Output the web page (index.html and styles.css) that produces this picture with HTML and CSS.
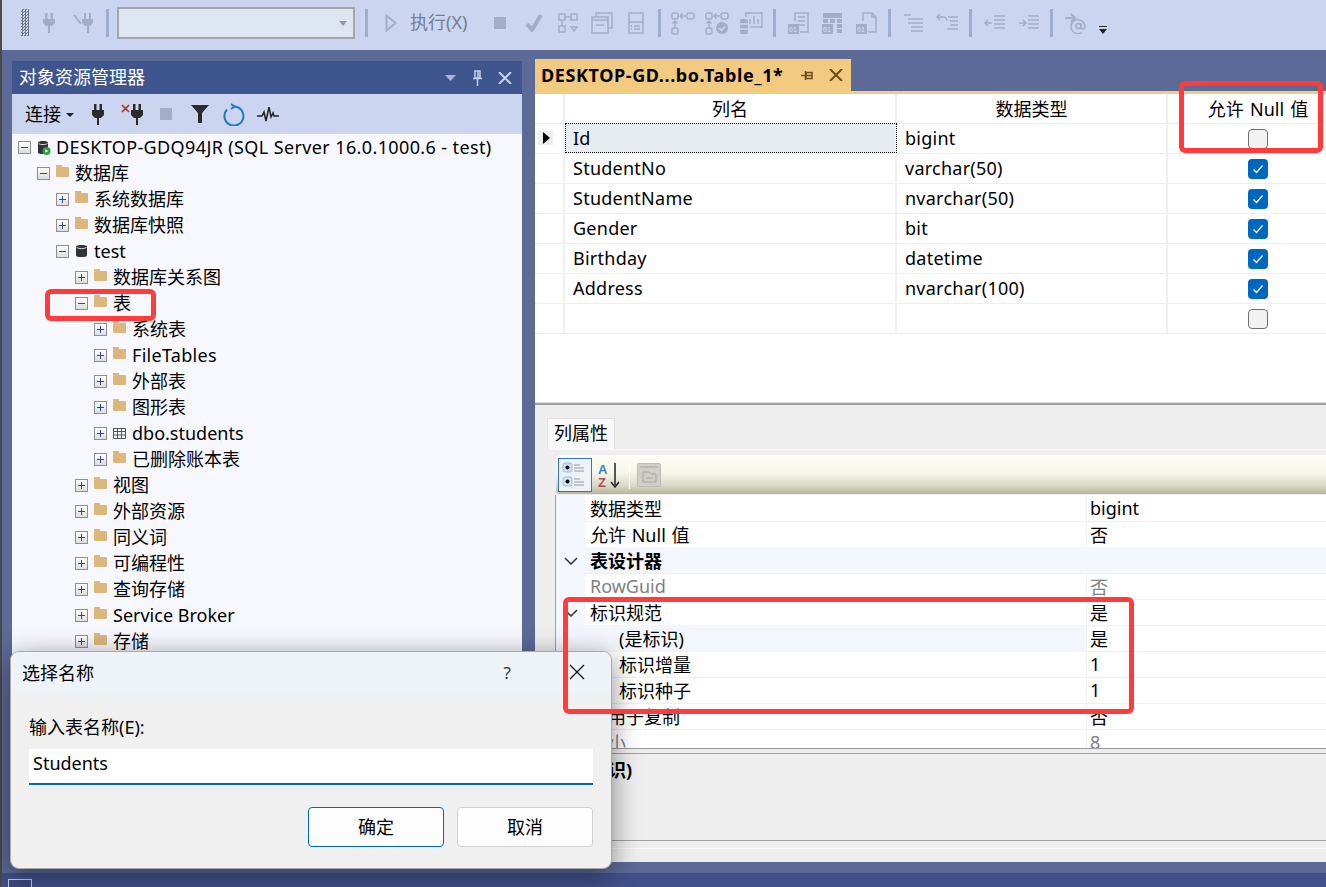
FILE: index.html
```html
<!DOCTYPE html>
<html lang="zh">
<head>
<meta charset="utf-8">
<title>SSMS 表设计器</title>
<link rel="stylesheet" href="styles.css">
</head>
<body>
<div class="app">
  <div class="toolbar">
    <div class="grip"></div>
    <div class="tool t-plug"><svg width="12" height="20" viewBox="0 0 12 20"><path class="dis" d="M2 0h2.500v6H2zM7.500 0H10v6H7.500zM0 6h12v4l-3 3H7v7H5v-7H3l-3-3z"/></svg></div>
    <div class="tool t-plug2"><svg width="20" height="20" viewBox="0 0 20 20"><path class="dis" d="M11 0h2v6h-2zM16 0h2v6h-2zM9 6h11v4l-3 3h-1v7h-2v-7h-2l-3-3z"/><path class="dis-line wide" d="M1 2l7 9"/></svg></div>
    <div class="sep s-a"></div>
    <div class="combo"><span class="combo-caret"></span></div>
    <div class="sep s-b"></div>
    <div class="tool t-play"><svg width="12" height="18" viewBox="0 0 12 18"><path class="dis-line wide" d="M1.500 1.500v15l9-7.500z"/></svg></div>
    <div class="run-label">执行(X)</div>
    <div class="tool t34 t-stop"><svg width="12" height="12" viewBox="0 0 12 12"><rect class="dis" width="12" height="12"/></svg></div>
    <div class="tool t34"><svg width="18" height="18" viewBox="0 0 18 18"><path class="dis-thick" d="M2 10l5 6 9-15"/></svg></div>
    <div class="tool t34"><svg width="22" height="22" viewBox="0 0 22 22"><path class="dis-line" d="M2 2h6v6H2zM14 2h6v6h-6zM2 14h6v6H2zM14 15l3 4 3-4zM5 8v6M8 5h6"/></svg></div>
    <div class="tool t34"><svg width="22" height="22" viewBox="0 0 22 22"><path class="dis-line" d="M5 5V1h16v15h-4M1 5h16v16H1zM1 8h16M5 13h8"/></svg></div>
    <div class="tool t34"><svg width="16" height="22" viewBox="0 0 16 22"><path class="dis-line" d="M1 1h14v20H1zM1 10h14M6 14h6M6 17h6M3 14h1M3 17h1"/></svg></div>
    <div class="sep"></div>
    <div class="tool t34"><svg width="24" height="24" viewBox="0 0 24 24"><g class="dis-line"><rect x="1" y="2" width="6" height="6" rx="1.500"/><rect x="16" y="2" width="7" height="6" rx="2"/><rect x="1" y="17" width="6" height="6" rx="1.500"/><path d="M9 5h6M11.500 2.500L9 5l2.500 2.500M4 10v7M1.500 12.500L4 10l2.500 2.500"/></g></svg></div>
    <div class="tool t34"><svg width="24" height="24" viewBox="0 0 24 24"><g class="dis-line"><rect x="1" y="2" width="6" height="6" rx="1.500"/><rect x="16" y="2" width="7" height="6" rx="2"/><rect x="1" y="17" width="6" height="6" rx="1.500"/><path d="M9 5h6M11.500 2.500L9 5l2.500 2.500M4 10v7M1.500 12.500L4 10l2.500 2.500"/></g><circle class="dis" cx="17" cy="17" r="6"/><path class="cut" d="M14 17l2.500 2.500 3.500-4"/></svg></div>
    <div class="tool t34"><svg width="24" height="24" viewBox="0 0 24 24"><path class="dis-line" d="M7 6V2h16v14H11M11 13V8M15 13V5M19 13V8"/><rect class="dis" x="1" y="8" width="8" height="15" rx="1.500"/><path class="cut" d="M1 13h8M1 18h8"/></svg></div>
    <div class="sep"></div>
    <div class="tool t34"><svg width="21" height="22" viewBox="0 0 21 22"><path class="dis-line" d="M7 9V1h13v19h-8M10 5h7M10 9h7M10 13h7"/><rect class="dis" x="0" y="12" width="11" height="10"/><text class="zero" x="1" y="20">01</text></svg></div>
    <div class="tool t34"><svg width="21" height="22" viewBox="0 0 21 22"><path class="dis" d="M1 1h19v5H1zM1 7h5v4H1zM8 7h5v4H8zM15 7h5v4h-5zM15 12h5v4h-5zM15 17h5v4h-5z"/><rect class="dis" x="0" y="12" width="11" height="10"/><text class="zero" x="1" y="20">01</text></svg></div>
    <div class="tool t34"><svg width="21" height="22" viewBox="0 0 21 22"><path class="dis-line" d="M7 9V1h9l4 4v15h-8M16 1v4h4"/><rect class="dis" x="0" y="12" width="11" height="10"/><text class="zero" x="1" y="20">01</text></svg></div>
    <div class="sep"></div>
    <div class="tool t34"><svg width="19" height="20" viewBox="0 0 19 20"><path class="dis-line" d="M0 2h7M4 6h15M4 10h15M7 14h12M7 18h12"/></svg></div>
    <div class="tool t34"><svg width="23" height="20" viewBox="0 0 23 20"><path class="dis-line" d="M4 1L1 4l3 3M1 4h6a4 4 0 0 1 4 4M12 4h10M14 8h8M14 12h8M11 16h11"/></svg></div>
    <div class="sep"></div>
    <div class="tool t34"><svg width="21" height="16" viewBox="0 0 21 16"><path class="dis-line" d="M8 8H1M4 5L1 8l3 3M10 1h11M10 5h11M10 9h11M10 13h11"/></svg></div>
    <div class="tool t34"><svg width="21" height="16" viewBox="0 0 21 16"><path class="dis-line" d="M1 8h7M5 5l3 3-3 3M10 1h11M10 5h11M10 9h11M10 13h11"/></svg></div>
    <div class="sep"></div>
    <div class="tool t34"><svg width="22" height="22" viewBox="0 0 22 22"><path class="dis-line wide" d="M1 6h10M7 2l4 4-4 4"/><circle class="dis-line" cx="14.500" cy="14" r="2.500"/><path class="dis-line" d="M17 11v4a2 2 0 0 0 4 0 7 7 0 1 0-3 5.500"/></svg></div>
    <div class="overflow"></div>
  </div>

  <div class="work">
    <section class="explorer">
      <header class="ex-title">
        <span class="ex-name">对象资源管理器</span>
        <svg class="ex-down" width="11" height="6" viewBox="0 0 11 6"><path d="M0 0h11L5.500 6z"/></svg>
        <svg class="ex-pin" width="11" height="16" viewBox="0 0 11 16"><path class="pin-line" d="M3 1h5v7H3zM6 1v7M1 8.500h9M5.500 9v7"/></svg>
        <svg class="ex-x" width="14" height="12" viewBox="0 0 14 12"><path class="x-line" d="M1 0l12 12M13 0L1 12"/></svg>
      </header>
      <div class="ex-tools">
        <span class="connect">连接</span>
        <span class="caret"></span>
        <svg class="et e1" width="12" height="21" viewBox="0 0 12 21"><path class="blk" d="M2 0h2.500v6H2zM7.500 0H10v6H7.500zM0 6h12v5l-3 3H7v7H5v-7H3l-3-3z"/></svg>
        <svg class="et e2" width="22" height="21" viewBox="0 0 22 21"><path class="blk" d="M12 0h2.500v6H12zM17.500 0H20v6h-2.500zM10 6h12v5l-3 3h-2v7h-2v-7h-2l-3-3z"/><path class="redx" d="M1 1l7 7M8 1L1 8"/></svg>
        <svg class="et e3" width="12" height="12" viewBox="0 0 12 12"><rect class="gry" width="12" height="12"/></svg>
        <svg class="et e4" width="18" height="18" viewBox="0 0 18 18"><path class="blk" d="M0 0h18l-7 8v10H7V8z"/></svg>
        <svg class="et e5" width="22" height="23" viewBox="0 0 22 23"><path class="ref" d="M11 3.500a9.500 9.500 0 1 1-7 3"/><path class="ref" d="M8 1l3.500 2.500L8 6"/></svg>
        <svg class="et e6" width="22" height="15" viewBox="0 0 22 15"><path class="act" d="M0 9h5l2-4 2 9 3-14 2 10 2-4 1 3h5"/></svg>
      </div>
      <div class="tree">
        <div class="node l0"><span class="exp minus"></span><svg class="ico" width="14" height="15" viewBox="0 0 14 15"><path class="db" d="M1 2.500C1 .5 11 .5 11 2.500v10c0 2-10 2-10 0z"/><path class="db-top" d="M1.500 3.500c2 1.500 7 1.500 9 0"/><circle class="run" cx="9.500" cy="11" r="4"/><path class="run-p" d="M8.300 9.200v3.600l3-1.800z"/></svg><span class="lbl lat root">DESKTOP-GDQ94JR (SQL Server 16.0.1000.6 - test)</span></div>
        <div class="node l1"><span class="exp minus"></span><span class="folder"></span><span class="lbl">数据库</span></div>
        <div class="node l2"><span class="exp plus"></span><span class="folder"></span><span class="lbl">系统数据库</span></div>
        <div class="node l2"><span class="exp plus"></span><span class="folder"></span><span class="lbl">数据库快照</span></div>
        <div class="node l2"><span class="exp minus"></span><svg class="ico" width="13" height="14" viewBox="0 0 13 14"><path class="db" d="M1 2.500C1 .5 12 .5 12 2.500v9c0 2-11 2-11 0z"/><path class="db-top" d="M1.500 3.500c2 1.500 8 1.500 10 0"/></svg><span class="lbl lat">test</span></div>
        <div class="node l3"><span class="exp plus"></span><span class="folder"></span><span class="lbl">数据库关系图</span></div>
        <div class="node l3"><span class="exp minus"></span><span class="folder"></span><span class="lbl sel">表</span></div>
        <div class="node l4"><span class="exp plus"></span><span class="folder"></span><span class="lbl">系统表</span></div>
        <div class="node l4"><span class="exp plus"></span><span class="folder"></span><span class="lbl lat file">FileTables</span></div>
        <div class="node l4"><span class="exp plus"></span><span class="folder"></span><span class="lbl">外部表</span></div>
        <div class="node l4"><span class="exp plus"></span><span class="folder"></span><span class="lbl">图形表</span></div>
        <div class="node l4"><span class="exp plus"></span><svg class="ico" width="13" height="11" viewBox="0 0 13 11"><path class="tbl" d="M.5.500h12v10H.5zM.5 3.500h12M.5 7h12M4.500.500v10M8.500.500v10"/></svg><span class="lbl lat">dbo.students</span></div>
        <div class="node l4"><span class="exp plus"></span><span class="folder"></span><span class="lbl">已删除账本表</span></div>
        <div class="node l3"><span class="exp plus"></span><span class="folder"></span><span class="lbl">视图</span></div>
        <div class="node l3"><span class="exp plus"></span><span class="folder"></span><span class="lbl">外部资源</span></div>
        <div class="node l3"><span class="exp plus"></span><span class="folder"></span><span class="lbl">同义词</span></div>
        <div class="node l3"><span class="exp plus"></span><span class="folder"></span><span class="lbl">可编程性</span></div>
        <div class="node l3"><span class="exp plus"></span><span class="folder"></span><span class="lbl">查询存储</span></div>
        <div class="node l3"><span class="exp plus"></span><span class="folder"></span><span class="lbl lat">Service Broker</span></div>
        <div class="node l3"><span class="exp plus"></span><span class="folder"></span><span class="lbl">存储</span></div>
      </div>
    </section>

    <section class="doc">
      <div class="tabstrip">
        <div class="tab">
          <span class="tab-name">DESKTOP-GD...bo.Table_1*</span>
          <svg class="tab-pin" width="13" height="11" viewBox="0 0 13 11"><path class="tab-line" d="M0 5.500h4M4.500 1v9M5 2.500h6v6H5zM5 5.500h6"/></svg>
          <svg class="tab-x" width="14" height="12" viewBox="0 0 14 12"><path class="tab-line thick" d="M1 0l12 12M13 0L1 12"/></svg>
        </div>
      </div>
      <div class="tabline"></div>
      <div class="design">
        <div class="row head"><div class="c0"></div><div class="c1 ctr">列名</div><div class="c2 ctr">数据类型</div><div class="c3 ctr nulltitle">允许 Null 值</div></div>
        <div class="row"><div class="c0"><span class="sel-arrow"></span></div><div class="c1 cur">Id</div><div class="c2">bigint</div><div class="c3 ctr"><span class="cb"></span></div></div>
        <div class="row"><div class="c0"></div><div class="c1">StudentNo</div><div class="c2">varchar(50)</div><div class="c3 ctr"><span class="cb on"><svg width="20" height="20" viewBox="0 0 20 20"><path class="chk" d="M5.500 10.500l3 3 6-7"/></svg></span></div></div>
        <div class="row"><div class="c0"></div><div class="c1">StudentName</div><div class="c2">nvarchar(50)</div><div class="c3 ctr"><span class="cb on"><svg width="20" height="20" viewBox="0 0 20 20"><path class="chk" d="M5.500 10.500l3 3 6-7"/></svg></span></div></div>
        <div class="row"><div class="c0"></div><div class="c1">Gender</div><div class="c2">bit</div><div class="c3 ctr"><span class="cb on"><svg width="20" height="20" viewBox="0 0 20 20"><path class="chk" d="M5.500 10.500l3 3 6-7"/></svg></span></div></div>
        <div class="row"><div class="c0"></div><div class="c1">Birthday</div><div class="c2">datetime</div><div class="c3 ctr"><span class="cb on"><svg width="20" height="20" viewBox="0 0 20 20"><path class="chk" d="M5.500 10.500l3 3 6-7"/></svg></span></div></div>
        <div class="row"><div class="c0"></div><div class="c1">Address</div><div class="c2">nvarchar(100)</div><div class="c3 ctr"><span class="cb on"><svg width="20" height="20" viewBox="0 0 20 20"><path class="chk" d="M5.500 10.500l3 3 6-7"/></svg></span></div></div>
        <div class="row"><div class="c0"></div><div class="c1"></div><div class="c2"></div><div class="c3 ctr"><span class="cb"></span></div></div>
      </div>
      <div class="splitter"></div>
      <div class="lower">
        <div class="ptab"><span class="ptab-name">列属性</span></div>
        <div class="pbox">
          <div class="ptools">
            <span class="pbtn active"><svg width="28" height="28" viewBox="0 0 28 28"><rect class="pi-b" x="2" y="2" width="9" height="9" rx="2"/><rect class="pi-b" x="2" y="16" width="9" height="9" rx="2"/><circle cx="6.500" cy="6.500" r="2"/><circle cx="6.500" cy="20.500" r="2"/><path class="pi-l" d="M13 4h6M13 7h10M13 10h10M13 18h6M13 21h10M13 24h10"/></svg></span>
            <span class="az"><svg width="24" height="26" viewBox="0 0 24 26"><text class="az-a" x="1" y="12">A</text><text class="az-z" x="1" y="25">Z</text><path class="az-arrow" d="M18 1v22M14 20l4 5 4-5"/></svg></span>
            <span class="psep"></span>
            <span class="pgear"><svg width="24" height="24" viewBox="0 0 24 24"><rect class="pg-b" x=".5" y=".5" width="23" height="23" rx="1"/><path class="pg-l" d="M3 4h18M6 9h6l2 2h5v8H6zM9 15h7"/></svg></span>
          </div>
          <div class="pgrid">
            <div class="prow"><div class="pm"></div><div class="pk">数据类型</div><div class="pv">bigint</div></div>
            <div class="prow"><div class="pm"></div><div class="pk nullkey">允许 Null 值</div><div class="pv">否</div></div>
            <div class="prow cat"><div class="pm"><svg width="14" height="8" viewBox="0 0 14 8"><path class="chev" d="M1 1l6 6 6-6"/></svg></div><div class="pk">表设计器</div><div class="pv"></div></div>
            <div class="prow off"><div class="pm"></div><div class="pk">RowGuid</div><div class="pv">否</div></div>
            <div class="prow"><div class="pm"><svg width="14" height="8" viewBox="0 0 14 8"><path class="chev" d="M1 1l6 6 6-6"/></svg></div><div class="pk">标识规范</div><div class="pv">是</div></div>
            <div class="prow tint sub"><div class="pm"></div><div class="pk">(是标识)</div><div class="pv">是</div></div>
            <div class="prow sub"><div class="pm"></div><div class="pk">标识增量</div><div class="pv">1</div></div>
            <div class="prow sub"><div class="pm"></div><div class="pk">标识种子</div><div class="pv">1</div></div>
            <div class="prow"><div class="pm"></div><div class="pk">不用于复制</div><div class="pv">否</div></div>
            <div class="prow off"><div class="pm"></div><div class="pk">大小</div><div class="pv">8</div></div>
          </div>
          <div class="pdesc">(是标识)</div>
          <div class="pfoot"></div>
        </div>
      </div>
    </section>
  </div>

  <footer class="status"><span class="status-box"></span></footer>
</div>

<div class="dialog">
  <div class="dlg-title"><span class="dlg-name">选择名称</span><span class="dlg-help">?</span><svg class="dlg-x" width="16" height="16" viewBox="0 0 16 16"><path class="dlg-xl" d="M1 1l14 14M15 1L1 15"/></svg></div>
  <div class="dlg-body">
    <label class="dlg-label">输入表名称(E):</label>
    <div class="dlg-input">Students</div>
    <div class="dlg-btns"><span class="btn primary">确定</span><span class="btn">取消</span></div>
  </div>
</div>

<div class="mark mark-null"></div>
<div class="mark mark-table"></div>
<div class="mark mark-ident"></div>
</body>
</html>
```

FILE: styles.css
```css
* { box-sizing: border-box; }
html, body { margin: 0; padding: 0; }
body {
  width: 1326px; height: 887px; overflow: hidden; position: relative;
  font-family: "Noto Sans", "Noto Sans CJK SC", sans-serif;
  font-size: 18px; color: #000; background: #5c6a97;
}
svg { display: block; }
.app { height: 887px; display: flex; flex-direction: column; border-left: 2px solid #4a4a4a; }

/* main toolbar */
.toolbar { height: 50px; flex: none; background: #cbd5ef; display: flex; align-items: center; padding: 0 0 5px 19px; }
.grip { width: 8px; height: 27px; background: repeating-conic-gradient(#6f7687 0 25%, transparent 0 50%) 0 0 / 3px 3px; margin-right: 8px; }
.tool { display: flex; align-items: center; justify-content: center; flex: none; }
.t-plug { width: 24px; }
.t-plug2 { width: 36px; margin-left: 4px; }
.t34 { width: 34px; }
.t-play { width: 12px; margin-left: 12px; }
.t-stop { margin-left: 13px; }
.sep { width: 13px; height: 28px; flex: none; position: relative; }
.sep::after { content: ""; position: absolute; left: 5px; top: 0; width: 3px; height: 28px; background: #9eacd0; }
.s-b { margin-left: 5px; }
.combo { width: 238px; height: 32px; margin-left: 3px; background: #dfe6f3; border: 2px solid #a6a6a6; position: relative; flex: none; }
.combo-caret { position: absolute; right: 6px; top: 12px; border: 4px solid transparent; border-top: 5px solid #999; border-left-width: 4.500px; border-right-width: 4.500px; }
.run-label { color: #767d95; margin-left: 13px; width: 60px; white-space: nowrap; padding-bottom: 3px; }
.dis { fill: #a4adc8; }
.dis-line { fill: none; stroke: #a4adc8; stroke-width: 1.500; }
.wide { stroke-width: 2; }
.dis-thick { fill: none; stroke: #a4adc8; stroke-width: 4; }
.cut { fill: none; stroke: #cbd5ef; stroke-width: 1.500; }
.zero { fill: #cbd5ef; font-size: 7px; font-family: "Liberation Sans", sans-serif; font-weight: 700; }
.overflow { width: 8px; height: 8px; margin: 14px 0 0 7px; border-top: 1px solid #222; position: relative; }
.overflow::after { content: ""; position: absolute; top: 2px; left: 0; border: 4px solid transparent; border-top: 5px solid #222; border-bottom: 0; }

/* work area */
.work { flex: 1; min-height: 0; display: flex; gap: 13px; padding: 9px 0 11px 10px; }
.explorer { width: 510px; flex: none; margin-top: 2px; display: flex; flex-direction: column; background: #f6f8fe; }
.ex-title { height: 33px; flex: none; background: #3f558e; color: #fff; display: flex; align-items: center; padding: 0 10px 0 7px; }
.ex-name { flex: 1; padding-bottom: 4px; }
.ex-down { fill: #aab4d6; margin-right: 16px; }
.ex-pin { margin-right: 15px; }
.pin-line { fill: none; stroke: #c7d0e8; stroke-width: 1.500; }
.x-line { fill: none; stroke: #c7d0e8; stroke-width: 2; }
.ex-tools { height: 40px; flex: none; background: #cbd5ef; display: flex; align-items: center; padding-left: 13px; }
.connect { width: 36px; padding-bottom: 2px; }
.caret { margin-left: 5px; border: 4px solid transparent; border-top: 4px solid #222; border-bottom: 0; margin-top: 2px; }
.e1 { margin-left: 18px; }
.e2 { margin-left: 17px; }
.e3 { margin-left: 17px; }
.e4 { margin-left: 19px; }
.e5 { margin-left: 14px; }
.e6 { margin-left: 12px; }
.blk { fill: #2b2b2b; }
.gry { fill: #a4adc8; }
.redx { fill: none; stroke: #b02a10; stroke-width: 1.500; }
.ref { fill: none; stroke: #1f78c1; stroke-width: 2; }
.act { fill: none; stroke: #222; stroke-width: 1.500; }

.tree { flex: 1; overflow: hidden; }
.node { height: 26px; display: flex; align-items: center; white-space: nowrap; }
.l0 { padding-left: 6px; }
.l1 { padding-left: 25px; }
.l2 { padding-left: 44px; }
.l3 { padding-left: 63px; }
.l4 { padding-left: 82px; }
.exp { width: 13px; height: 13px; flex: none; border: 1px solid #8f8f8f; background: linear-gradient(#fff, #dcdcdc); position: relative; margin-right: 6px; }
.exp::before { content: ""; position: absolute; left: 2px; right: 2px; top: 5px; height: 1px; background: #2b4a8c; }
.plus::after { content: ""; position: absolute; top: 2px; bottom: 2px; left: 5px; width: 1px; background: #2b4a8c; }
.folder { width: 13px; height: 10px; flex: none; background: #dcb67a; position: relative; margin-right: 6px; margin-top: -3px; border-radius: 1px; }
.folder::before { content: ""; position: absolute; left: 0; top: -2px; width: 6px; height: 2px; background: #dcb67a; }
.ico { flex: none; margin-right: 6px; }
.l0 .ico { margin-right: 5px; }
.db { fill: #333; }
.db-top { fill: none; stroke: #d8d8d8; stroke-width: 1; }
.run { fill: #2e9e3f; }
.run-p { fill: #fff; }
.tbl { fill: none; stroke: #555; stroke-width: 1; }
.lbl { display: block; padding-bottom: 2px; }
.lat { padding-bottom: 0; }
.root { letter-spacing: .38px; }
.file { letter-spacing: .3px; }
.sel { background: #eeeeee; padding-bottom: 0; line-height: 18px; }

/* document */
.doc { flex: 1; min-width: 0; display: flex; flex-direction: column; }
.tabstrip { height: 32px; flex: none; }
.tab { width: 316px; height: 32px; background: #f3cb80; display: flex; align-items: center; padding-left: 6px; }
.tab-name { font-weight: 700; flex: none; width: 260px; white-space: nowrap; letter-spacing: .6px; }
.tab-x { margin-left: 15px; }
.tab-line { fill: none; stroke: #6b4b1f; stroke-width: 1.500; }
.thick { stroke-width: 2; }
.tabline { height: 3px; flex: none; background: #f3cb80; }
.design { height: 308px; flex: none; background: #fff; overflow: hidden; }
.row { height: 30px; display: grid; grid-template-columns: 30px 332px 271px 180px; box-shadow: 0 1px 0 #eeeeee; }
.head { height: 29px; }
.row > div { display: flex; align-items: center; padding-left: 8px; border-right: 2px solid #f0f0f0; white-space: nowrap; letter-spacing: .25px; }
.head > div { letter-spacing: 0; padding-bottom: 2px; }
.row > .c0 { padding-left: 3px; }
.row > .c3 { border-right: 0; }
.row > .ctr { justify-content: center; padding-left: 0; }
.nulltitle { word-spacing: 1.500px; }
.cur { background: #e7ecf1; outline: 1px dotted #000; outline-offset: -1px; }
.sel-arrow { width: 15px; height: 14px; position: relative; background: #eee; }
.sel-arrow::after { content: ""; position: absolute; left: 5px; top: 1px; border-left: 7px solid #000; border-top: 6px solid transparent; border-bottom: 6px solid transparent; }
.cb { width: 20px; height: 20px; margin-top: 2px; border: 1px solid #707070; border-radius: 4px; background: #f2f2f2; display: block; }
.cb.on { background: #0067c0; border: 0; }
.chk { fill: none; stroke: #fff; stroke-width: 1.200; }
.splitter { height: 3px; flex: none; background: #a0a0a0; border-top: 1px solid #e0e0e0; }
.lower { flex: 1; min-height: 0; background: #eeeeee; padding: 13px 0 0 12px; display: flex; flex-direction: column; }
.ptab { width: 68px; height: 31px; flex: none; background: #f8f8f8; border: 1px solid #e2e2e2; border-bottom: 0; display: flex; align-items: center; justify-content: center; }
.ptab-name { padding-bottom: 5px; }
.pbox { flex: 1; min-height: 0; margin-left: 3px; border-top: 1px solid #fafafa; padding: 5px 0 0 6px; display: flex; flex-direction: column; }
.ptools { height: 39px; flex: none; display: flex; align-items: center; padding-left: 2px; border-radius: 4px 0 0 4px; background: linear-gradient(#fdfdf6 0%, #f7f6ea 45%, #d8d7c4 80%, #b5b49b 100%); }
.pbtn { width: 34px; height: 34px; display: flex; align-items: center; justify-content: center; }
.active { background: #eef1f6; border: 1px solid #3370c8; }
.pi-b { fill: #cfe3f4; stroke: #8fc4da; }
.pi-l { stroke: #9a9a9a; fill: none; }
.az { margin-left: 5px; width: 30px; }
.az-a { fill: #3a7cd0; font-size: 13px; font-weight: 700; font-family: "Liberation Sans", sans-serif; }
.az-z { fill: #a0505a; font-size: 13px; font-weight: 700; font-family: "Liberation Sans", sans-serif; }
.az-arrow { fill: none; stroke: #222; stroke-width: 1.500; }
.psep { width: 1px; height: 28px; background: #fff; margin: 0 7px 0 2px; }
.pg-b { fill: #cfcfc8; stroke: #bdbdb5; }
.pg-l { fill: none; stroke: #a5a5a5; }
.pgrid { height: 254px; flex: none; overflow: hidden; background: #fff; margin-left: -1px; border-left: 1px solid #a0a0a0; margin-top: 1px; border-bottom: 1px solid #9a9a9a; }
.prow { height: 26px; display: grid; grid-template-columns: 29px 501px 1fr; box-shadow: 0 1px 0 #f0f0f0; white-space: nowrap; }
.prow > div { display: flex; align-items: center; }
.pm { background: #f3f6fc; justify-content: center; }
.pk { padding-left: 5px; padding-bottom: 1px; }
.nullkey { word-spacing: 1px; }
.pv { padding-left: 3px; padding-bottom: 1px; border-left: 1px solid #f0f0f0; }
.cat { background: #f3f6fc; font-weight: 700; }
.cat .pv { border-left: 0; }
.off { color: #808080; }
.sub .pk { padding-left: 34px; }
.tint .pk { background: #f3f6fc; }
.chev { fill: none; stroke: #333; stroke-width: 1.500; }
.pdesc { height: 88px; flex: none; margin: 4px 0 0 -1px; padding: 2px 0 0 11px; font-weight: 700; border-top: 1px solid #a0a0a0; border-bottom: 1px solid #a0a0a0; }
.pfoot { flex: 1; margin: 7px 0 0 -1px; border-top: 1px solid #f8f8f8; }

/* status */
.status { height: 14px; flex: none; background: #40518a; padding: 6px 0 0 6px; overflow: hidden; }
.status-box { display: block; width: 24px; height: 12px; border: 1px solid #c5cde0; background: #3c4a7c; }

/* dialog */
.dialog {
  position: absolute; left: 10px; top: 651px; width: 602px; height: 218px;
  border-radius: 9px; overflow: hidden; background: #f0f0f0;
  border: 1px solid #a9a9a9;
  box-shadow: 0 6px 28px rgba(0,0,0,.45);
}
.dlg-title { height: 43px; background: #eef3f8; display: flex; align-items: center; padding: 0 0 3px 11px; }
.dlg-name { flex: 1; }
.dlg-help { margin-right: 58px; font-size: 17px; color: #333; }
.dlg-x { margin-right: 26px; }
.dlg-xl { fill: none; stroke: #111; stroke-width: 1.300; }
.dlg-body { padding: 19px 18px 0 18px; }
.dlg-label { display: block; line-height: 26px; }
.dlg-input { height: 36px; margin-top: 9px; background: #fff; border-bottom: 2px solid #0067c0; padding: 0 4px; line-height: 29px; }
.dlg-btns { display: flex; justify-content: flex-end; gap: 13px; margin-top: 22px; }
.btn { width: 136px; height: 40px; background: #fdfdfd; border: 1px solid #d0d0d0; border-radius: 4px; display: flex; align-items: center; justify-content: center; padding-bottom: 3px; }
.primary { border: 1px solid #0067c0; }

/* red annotations */
.mark { position: absolute; border: 5px solid #ff3b3b; border-radius: 6px; pointer-events: none; }
.mark-null { left: 1179px; top: 81px; width: 144px; height: 72px; }
.mark-table { left: 45px; top: 289px; width: 111px; height: 32px; }
.mark-ident { left: 563px; top: 597px; width: 571px; height: 117px; }
```
